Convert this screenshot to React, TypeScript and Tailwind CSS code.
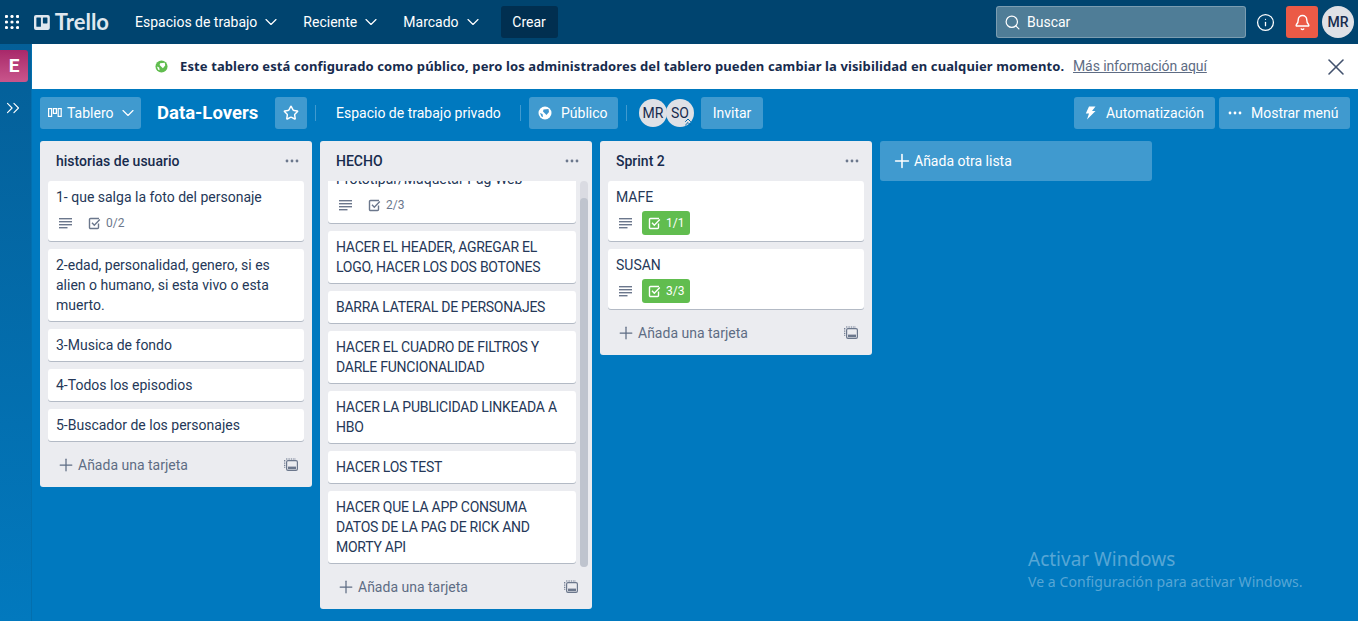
import { Bell, ChevronDown, ChevronsRight, ChevronsUp, Info, Plus, Search, Star, X } from 'lucide-react';

type Card = { title: string[]; desc?: boolean; check?: string; done?: boolean };

const first: Card[] = [
  { title: ['1- que salga la foto del personaje'], desc: true, check: '0/2' },
  { title: ['2-edad, personalidad, genero, si es', 'alien o humano, si esta vivo o esta', 'muerto.'] },
  { title: ['3-Musica de fondo'] },
  { title: ['4-Todos los episodios'] },
  { title: ['5-Buscador de los personajes'] },
];

const hecho: Card[] = [
  { title: ['HACER EL HEADER, AGREGAR EL', 'LOGO, HACER LOS DOS BOTONES'] },
  { title: ['BARRA LATERAL DE PERSONAJES'] },
  { title: ['HACER EL CUADRO DE FILTROS Y', 'DARLE FUNCIONALIDAD'] },
  { title: ['HACER LA PUBLICIDAD LINKEADA A', 'HBO'] },
  { title: ['HACER LOS TEST'] },
  { title: ['HACER QUE LA APP CONSUMA', 'DATOS DE LA PAG DE RICK AND', 'MORTY API'] },
];

const sprint: Card[] = [
  { title: ['MAFE'], desc: true, check: '1/1', done: true },
  { title: ['SUSAN'], desc: true, check: '3/3', done: true },
];

function Lines() {
  return (
    <svg width="13" height="11" viewBox="0 0 13 11" className="text-[#6b778c]" fill="currentColor">
      <rect x="0" y="0" width="13" height="1.4" />
      <rect x="0" y="3" width="13" height="1.4" />
      <rect x="0" y="6" width="13" height="1.4" />
      <rect x="0" y="9" width="8.5" height="1.4" />
    </svg>
  );
}

function Dots({ className }: { className: string }) {
  return (
    <svg width="14" height="4" viewBox="0 0 14 4" className={className} fill="currentColor">
      <circle cx="2" cy="2" r="1.4" />
      <circle cx="7" cy="2" r="1.4" />
      <circle cx="12" cy="2" r="1.4" />
    </svg>
  );
}

function Globe({ className, land }: { className: string; land: string }) {
  return (
    <svg width="14" height="14" viewBox="0 0 14 14" className={className}>
      <circle cx="7" cy="7" r="6.5" fill="currentColor" />
      <path d="M5.5 3.5 L10.5 3 L11 6 L8.5 9 L6.5 7 L5 5.5 Z" fill={land} />
      <path d="M2 7 L4.5 8 L5 11 L3.5 10.5 Z" fill={land} />
    </svg>
  );
}

function CheckIcon() {
  return (
    <svg width="13" height="13" viewBox="0 0 13 13" fill="none" stroke="currentColor" strokeWidth="1.4">
      <path d="M10.5 6.5v4a1 1 0 0 1-1 1h-7a1 1 0 0 1-1-1v-8a1 1 0 0 1 1-1h8.5" />
      <path d="M4 5.8l2.3 2.4L11.8 2.6" />
    </svg>
  );
}

function TemplateIcon() {
  return (
    <svg width="14" height="14" viewBox="0 0 14 14" fill="none" className="text-[#6b778c]">
      <path d="M2 1h10" stroke="currentColor" strokeWidth="1.2" strokeDasharray="1.4 1" />
      <path d="M.7 2v8" stroke="currentColor" strokeWidth="1.2" strokeDasharray="1.4 1" />
      <rect x="2.6" y="2.6" width="10.8" height="9.8" rx="1.4" stroke="currentColor" strokeWidth="1.2" />
      <rect x="4" y="8.6" width="8" height="2.6" fill="currentColor" />
    </svg>
  );
}

function Meta({ card }: { card: Card }) {
  return (
    <div className="flex items-center h-6 mt-1 ml-[3px]">
      {card.desc && (
        <span className="w-[29px] flex">
          <Lines />
        </span>
      )}
      {card.done ? (
        <span className="-ml-[6px] flex items-center gap-[5px] h-6 w-12 rounded-[3px] bg-[#61bd4f] text-white text-xs pl-[6px]">
          <CheckIcon />
          {card.check}
        </span>
      ) : (
        <span className="flex items-center gap-[5px] text-xs text-[#6b778c]">
          <CheckIcon />
          {card.check}
        </span>
      )}
    </div>
  );
}

function CardView({ card, tight }: { card: Card; tight?: boolean }) {
  return (
    <div className={`bg-white rounded-[3px] shadow-[0_1px_0_#b3bac5] px-2 py-[6px] text-[#253858] text-[14px] leading-5 ${tight ? 'tracking-[-0.25px]' : ''}`}>
      {card.title.map((t) => (
        <div key={t}>{t}</div>
      ))}
      {card.check && <Meta card={card} />}
    </div>
  );
}

function ListHead({ title }: { title: string }) {
  return (
    <div className="flex items-center justify-between h-10 pl-4 pr-[13px] shrink-0">
      <span className="text-[14px] font-medium text-[#172b4d]">{title}</span>
      <Dots className="text-[#6b778c]" />
    </div>
  );
}

function AddCard() {
  return (
    <div className="flex items-center justify-between h-[38px] mt-[5px] mb-[3px] pl-4 pr-[14px] text-[#5e6c84] text-[14px] shrink-0">
      <span className="flex items-center gap-[2px]">
        <Plus size={20} strokeWidth={1.5} />
        Añada una tarjeta
      </span>
      <TemplateIcon />
    </div>
  );
}

function NavItem({ label }: { label: string }) {
  return (
    <button className="flex items-center gap-[4px] text-[14px] text-white whitespace-nowrap">
      {label}
      <ChevronDown size={20} strokeWidth={1.4} />
    </button>
  );
}

function HeaderBtn({ children, className }: { children: React.ReactNode; className: string }) {
  return (
    <button className={`flex items-center h-8 rounded-[3px] bg-white/25 text-white text-[14px] whitespace-nowrap ${className}`}>{children}</button>
  );
}

export default function App() {
  return (
    <div className="w-full h-[621px] flex flex-col overflow-hidden relative font-['Roboto',sans-serif]">
      <header className="h-11 shrink-0 bg-[#00446f] flex items-center text-white">
        <svg width="14" height="14" viewBox="0 0 14 14" fill="currentColor" className="ml-[5px]">
          {[1.5, 7, 12.5].flatMap((y) => [1.5, 7, 12.5].map((x) => <circle key={`${x}-${y}`} cx={x} cy={y} r="1.6" />))}
        </svg>
        <span className="flex items-center ml-[15px] gap-[5px] w-[75px]">
          <svg width="16" height="15" viewBox="0 0 16 15">
            <rect width="16" height="15" rx="2" fill="#dfe7ee" />
            <rect x="2.4" y="2.4" width="4.6" height="9.5" rx="0.6" fill="#00446f" />
            <rect x="9" y="2.4" width="4.6" height="6" rx="0.6" fill="#00446f" />
          </svg>
          <span className="text-[22px] font-bold leading-none text-[#dfe7ee] font-['Lato',sans-serif]">Trello</span>
        </span>
        <nav className="flex items-center ml-[26px] gap-[22px]">
          <NavItem label="Espacios de trabajo" />
          <NavItem label="Reciente" />
          <NavItem label="Marcado" />
        </nav>
        <button className="ml-[18px] w-[57px] h-8 rounded-[3px] bg-[#012f50] text-[14px]">Crear</button>
        <div className="ml-auto w-[250px] h-8 rounded-[3px] bg-[#4f7d97] border border-white/25 flex items-center gap-[6px] pl-[7px] text-[14px]">
          <Search size={17} strokeWidth={1.7} />
          Buscar
        </div>
        <Info size={19} strokeWidth={1.6} className="ml-[10px]" />
        <span className="ml-[11px] w-8 h-8 rounded-[3px] bg-[#eb5a46] flex items-center justify-center">
          <Bell size={17} strokeWidth={2} />
        </span>
        <span className="mx-1 w-8 h-8 rounded-full bg-[#dfe1e6] text-[#172b4d] text-[14px] font-medium flex items-center justify-center">MR</span>
      </header>

      <div className="flex-1 flex min-h-0">
        <aside className="w-8 shrink-0 bg-gradient-to-b from-[#045f98] to-[#0279be] border-r border-[#036fae] flex flex-col text-white">
          <div className="mt-[6px] w-7 h-8 rounded-r-[3px] bg-gradient-to-b from-[#a8286a] to-[#c9558c] flex items-center justify-center font-bold text-[19px]">E</div>
          <ChevronsRight size={22} strokeWidth={1.2} className="mt-[15px] ml-[2px]" />
        </aside>

        <main className="flex-1 min-w-0 flex flex-col bg-[#0079bf]">
          <div className="h-[45px] shrink-0 bg-white flex items-center text-[14px] text-[#172b4d]">
            <Globe className="ml-[123px] w-[13px] h-[13px] text-[#61bd4f]" land="#ffffff" />
            <b className="ml-[12px] w-[885px] text-[13px] font-bold whitespace-nowrap tracking-[0.11px] font-['Noto_Sans',sans-serif]">Este tablero está configurado como público, pero los administradores del tablero pueden cambiar la visibilidad en cualquier momento.</b>
            <u className="ml-2 text-[#5e6c84] whitespace-nowrap tracking-[-0.1px]">Más información aquí</u>
            <X size={28} strokeWidth={1.3} className="ml-auto mr-2 text-[#42526e]" />
          </div>

          <div className="h-[52px] shrink-0 flex items-start px-2 pt-2">
            <HeaderBtn className="w-[101px] pl-2 gap-[5px]">
              <svg width="14" height="10" viewBox="0 0 14 10" fill="none" stroke="currentColor" strokeWidth="1.2">
                <rect x="0.6" y="0.6" width="3" height="7.8" />
                <rect x="5.4" y="0.6" width="3" height="4.8" />
                <rect x="10.2" y="0.6" width="3" height="7.8" />
              </svg>
              Tablero
              <ChevronDown size={20} strokeWidth={1.4} />
            </HeaderBtn>
            <span className="ml-4 w-[102px] h-8 pt-[2px] flex items-center text-[18.5px] font-bold text-white whitespace-nowrap">Data-Lovers</span>
            <HeaderBtn className="ml-4 w-8 justify-center">
              <Star size={16} strokeWidth={2.2} />
            </HeaderBtn>
            <span className="ml-2 mt-2 h-4 w-px bg-white/25" />
            <span className="ml-5 w-[164px] h-8 flex items-center text-[14px] text-white whitespace-nowrap">Espacio de trabajo privado</span>
            <span className="ml-5 mt-2 h-4 w-px bg-white/25" />
            <HeaderBtn className="ml-2 w-[89px] pl-[9px] gap-[9px]">
              <Globe className="text-white" land="#3f97cf" />
              Público
            </HeaderBtn>
            <span className="ml-2 mt-2 h-4 w-px bg-white/25" />
            <div className="ml-3 mt-[2px] flex relative">
              <span className="w-7 h-7 rounded-full bg-[#dfe1e6] text-[#172b4d] text-[14px] flex items-center justify-center">MR</span>
              <span className="-ml-[1px] w-7 h-7 rounded-full bg-[#dfe1e6] text-[#172b4d] text-[14px] flex items-center justify-center">SO</span>
              <ChevronsUp size={12} strokeWidth={2} className="absolute right-0 bottom-[-1px] text-[#0065a8]" />
            </div>
            <HeaderBtn className="ml-[7px] w-[62px] justify-center">Invitar</HeaderBtn>
            <HeaderBtn className="ml-auto w-[141px] pl-[11px] gap-[10px]">
              <svg width="11" height="14" viewBox="0 0 11 14" fill="currentColor">
                <path d="M4 0.5 L10.5 0.5 L7 5 L10.5 5 L2 13.5 L4 7.5 L0.8 7.5 Z" />
              </svg>
              Automatización
            </HeaderBtn>
            <HeaderBtn className="ml-1 w-[131px] pl-[9px] gap-[9px]">
              <Dots className="text-white" />
              Mostrar menú
            </HeaderBtn>
          </div>

          <div className="flex-1 min-h-0 flex items-start gap-2 pl-2">
            <section className="w-[272px] bg-[#ebecf0] rounded-[3px]">
              <ListHead title="historias de usuario" />
              <div className="flex flex-col gap-2 px-2">
                {first.map((c) => (
                  <CardView key={c.title[0]} card={c} />
                ))}
              </div>
              <AddCard />
            </section>

            <section className="w-[272px] flex flex-col bg-[#ebecf0] rounded-[3px]">
              <ListHead title="HECHO" />
              <div className="h-[382px] flex pl-2">
                <div className="w-[248px] h-[383px] overflow-hidden flex flex-col gap-2 shrink-0">
                  <div className="-mt-[18px]">
                    <CardView card={{ title: ['Prototipar/Maquetar Pag Web'], desc: true, check: '2/3' }} />
                  </div>
                  {hecho.map((c) => (
                    <CardView key={c.title[0]} card={c} tight />
                  ))}
                </div>
                <div className="ml-1 w-2 h-[386px] rounded bg-[#dadbe2] pt-[17px]">
                  <div className="h-[369px] rounded bg-[#bfc4ce]" />
                </div>
              </div>
              <AddCard />
            </section>

            <section className="w-[272px] bg-[#ebecf0] rounded-[3px]">
              <ListHead title="Sprint 2" />
              <div className="flex flex-col gap-2 px-2">
                {sprint.map((c) => (
                  <CardView key={c.title[0]} card={c} />
                ))}
              </div>
              <AddCard />
            </section>

            <button className="w-[272px] h-10 rounded-[3px] bg-white/25 text-white text-[14px] flex items-center gap-[1px] pl-[11px]">
              <Plus size={22} strokeWidth={1.7} />
              Añada otra lista
            </button>
          </div>
        </main>
      </div>

      <div className="absolute left-[1028px] top-[546px] text-white/35 pointer-events-none font-['Noto_Sans',sans-serif]">
        <div className="text-[19px] leading-[27px]">Activar Windows</div>
        <div className="text-[14px] leading-[18px] tracking-[0.07px]">Ve a Configuración para activar Windows.</div>
      </div>
    </div>
  );
}
